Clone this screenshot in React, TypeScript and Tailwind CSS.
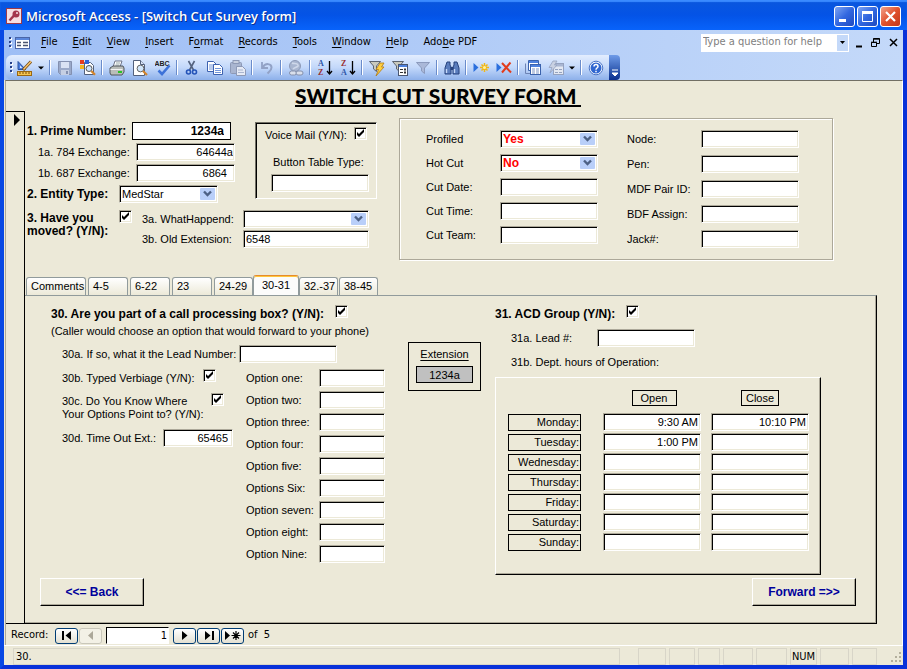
import type { ReactNode } from "react";

const sunken =
  "border border-t-[#aca899] border-l-[#aca899] border-r-white border-b-white shadow-[inset_1px_1px_0_#000,inset_-1px_-1px_0_#ece9d8]";
const raised =
  "border border-t-white border-l-white border-r-black border-b-black shadow-[inset_-1px_-1px_0_#aca899]";
const boldLabel = "text-[12px] font-bold";

/* ---------- form controls ---------- */

function Field({ id, value = "", className = "w-[98px]", label }: { id?: string; value?: string; className?: string; label?: string }) {
  return (
    <input
      id={id}
      aria-label={label}
      type="text"
      defaultValue={value}
      className={`block h-[18px] shrink-0 bg-white outline-none ${sunken} ${className}`}
    />
  );
}

function Combo({ id, value = "", className = "w-[98px]", textClass = "" }: { id: string; value?: string; className?: string; textClass?: string }) {
  return (
    <span className={`grid h-[18px] shrink-0 bg-white ${sunken} ${className}`}>
      <select id={id} defaultValue={value} className={`col-start-1 row-start-1 h-4 w-full appearance-none bg-transparent pl-0.5 leading-4 outline-none ${textClass}`}>
        <option>{value}</option>
      </select>
      <svg viewBox="0 0 15 12" className="pointer-events-none col-start-1 row-start-1 mt-0.5 mr-0.5 h-3 w-[15px] justify-self-end">
        <rect width="15" height="12" rx="1" fill="#b9cff9" />
        <path d="M4 3.5 L7.5 7 L11 3.5" fill="none" stroke="#4d6185" strokeWidth="2.4" />
      </svg>
    </span>
  );
}

function Check({ id }: { id: string }) {
  return (
    <span className="grid size-[13px] shrink-0">
      <input id={id} type="checkbox" defaultChecked className={`peer col-start-1 row-start-1 size-[13px] appearance-none bg-white ${sunken}`} />
      <svg viewBox="0 0 13 13" className="pointer-events-none invisible col-start-1 row-start-1 size-[13px] peer-checked:visible">
        <path d="M3 5v3l2 2 5-5V2L5 7z" fill="#000" />
      </svg>
    </span>
  );
}

/* ---------- toolbar ---------- */

function Tool({ name, children }: { name: string; children: ReactNode }) {
  return (
    <button type="button" aria-label={name} className="flex h-[22px] w-[23px] shrink-0 items-center justify-center">
      <svg viewBox="0 0 16 16" className="size-4" fill="none">
        {children}
      </svg>
    </button>
  );
}

function Sep() {
  return <span className="mx-0.5 h-[15px] w-0.5 shrink-0 border-r border-l border-l-[#6a8ccb] border-r-white" />;
}

function Caret({ name }: { name: string }) {
  return (
    <button type="button" aria-label={name} className="flex h-[22px] w-[11px] shrink-0 items-center">
      <svg viewBox="0 0 6 4" className="ml-0.5 h-1 w-1.5">
        <path d="M0 0.5h6L3 3.5z" fill="#000" />
      </svg>
    </button>
  );
}

function Grip() {
  return (
    <svg viewBox="0 0 3 12" className="h-3 w-[3px] shrink-0">
      {[0, 4, 8].map((y) => (
        <g key={y}>
          <rect x="1" y={y + 1} width="2" height="2" fill="#fff" />
          <rect y={y} width="2" height="2" fill="#27418a" />
        </g>
      ))}
    </svg>
  );
}

const Funnel = () => <path d="M0.5 1.500h11L7.500 6v5.500L4.500 9V6z" fill="#c9c9bd" stroke="#5d6470" />;

function Letter({ y, color, children }: { y: number; color: string; children: string }) {
  return (
    <text x={1} y={y} fontSize="8" fontWeight="bold" fontFamily="Liberation Serif, serif" fill={color}>
      {children}
    </text>
  );
}

function Toolbar() {
  return (
    <div className="flex h-[25px] shrink-0 pl-0.5">
      <div className="flex items-center rounded-l-md bg-linear-to-b from-[#e3edfe] via-[#c3d8fa] to-[#8db0ea] pl-1">
        <Grip />
        <Tool name="Design view">
          <path d="M1 1.5 L8.5 9.5H1z" fill="#4b7ee0" stroke="#28509f" />
          <path d="M3 5.5v2.5h2.4z" fill="#dbe8fd" />
          <rect x="0.5" y="11.5" width="14" height="4" fill="#f5c552" stroke="#9a6712" />
          <path d="M3 12v2M6 12v2M9 12v2M12 12v2" stroke="#7a4c08" />
          <path d="M6 10 L14 1.5" stroke="#6b4510" strokeWidth="3" />
          <path d="M6.5 9.5 L14 1.5" stroke="#fbc36a" strokeWidth="1.6" />
        </Tool>
        <Caret name="Views" />
        <Sep />
        <Tool name="Save">
          <path d="M1.5 1.5h13v13h-11l-2-2z" fill="#9aa9c9" stroke="#8390b0" />
          <rect x="4" y="2" width="8" height="6" fill="#d9e2f4" />
          <rect x="4" y="10" width="8" height="5" fill="#c5cfe3" />
          <rect x="9" y="11" width="2" height="3" fill="#8390b0" />
        </Tool>
        <Tool name="File search">
          <path d="M4.5 2.500h6l3 3v9h-9z" fill="#fff" stroke="#53617d" />
          <rect x="0" y="0" width="4" height="4" fill="#e33b20" />
          <rect x="5" y="0" width="4" height="4" fill="#2f62d8" />
          <rect x="0" y="5" width="4" height="4" fill="#f4b51f" />
          <circle cx="9" cy="8.5" r="3" fill="#cfe4fb" stroke="#555" />
          <path d="M11.3 11 L15 14.8" stroke="#d3842b" strokeWidth="2.2" />
        </Tool>
        <Sep />
        <Tool name="Print">
          <path d="M6 1h7l-2 6H4z" fill="#fff" stroke="#6d7488" />
          <path d="M7 3h4M6.5 5h4" stroke="#9aa" />
          <path d="M1 8l3-2h10l1 2v4l-2 3H2l-1-2z" fill="#b9bdb9" stroke="#50565e" />
          <path d="M1.5 9.5h12" stroke="#f3f3f3" />
          <rect x="9" y="11" width="4" height="2" fill="#28c328" />
        </Tool>
        <Tool name="Print preview">
          <path d="M1.5 0.5h7l4 4v11h-11z" fill="#fff" stroke="#53617d" />
          <path d="M8.5 0.5v4h4" fill="#dbe5f8" stroke="#53617d" />
          <circle cx="8.5" cy="8.5" r="3.4" fill="#d3e7fb" stroke="#666" />
          <path d="M11 11 L15 15" stroke="#d3842b" strokeWidth="2.2" />
        </Tool>
        <Tool name="Spelling">
          <text x="-0.5" y="6" fontSize="7" fontWeight="bold" fontFamily="Liberation Sans, sans-serif" fill="#222">
            ABC
          </text>
          <path d="M3.5 10.5 L7 14 L14.5 5.5" stroke="#3d72d8" strokeWidth="2.6" />
        </Tool>
        <Sep />
        <Tool name="Cut">
          <path d="M4.5 1 L9.5 10M10.5 1 L5.5 10" stroke="#54627e" strokeWidth="1.6" />
          <circle cx="4.5" cy="12" r="2" stroke="#2454b8" strokeWidth="1.6" />
          <circle cx="10.5" cy="12" r="2" stroke="#2454b8" strokeWidth="1.6" />
        </Tool>
        <Tool name="Copy">
          <path d="M0.5 1.5h6l3 3v7h-9z" fill="#fff" stroke="#3d62b0" />
          <path d="M2 5h5M2 7h5M2 9h4" stroke="#7296da" />
          <path d="M6.5 4.5h6l3 3v7h-9z" fill="#fff" stroke="#3d62b0" />
          <path d="M8 8.5h6M8 10.5h6M8 12.5h6" stroke="#7296da" />
        </Tool>
        <Tool name="Paste">
          <rect x="0.5" y="2.5" width="11" height="11" rx="1" fill="#a9b5d0" stroke="#8d99b6" />
          <rect x="3" y="0.5" width="6" height="3" fill="#c7cfdf" stroke="#8d99b6" />
          <path d="M6.5 6.5h6l3 3v6h-9z" fill="#e5eaf5" stroke="#8d99b6" />
          <path d="M8 10h5M8 12.500h6" stroke="#a9b5d0" />
        </Tool>
        <Sep />
        <Tool name="Undo">
          <path d="M3 2v6h6" stroke="#92a2c6" strokeWidth="1.8" />
          <path d="M3.500 7.500c3-5 9-4 9 0 0 3-2 4-4 6" stroke="#92a2c6" strokeWidth="2" />
        </Tool>
        <Sep />
        <Tool name="Insert hyperlink">
          <circle cx="7" cy="6" r="5.500" fill="#a9b6d0" stroke="#8c99b6" />
          <path d="M4 3c2 1 5 0 6 2s-3 2-5 4" stroke="#cfd8ea" strokeWidth="1.5" />
          <rect x="1.500" y="11" width="7" height="4" rx="2" fill="#d9dfeb" stroke="#8490ac" />
          <rect x="8" y="11" width="7" height="4" rx="2" fill="#d9dfeb" stroke="#8490ac" />
        </Tool>
        <Sep />
        <Tool name="Sort ascending">
          <Letter y={6} color="#2e55a8">A</Letter>
          <Letter y={15} color="#992f2f">Z</Letter>
          <path d="M12.500 1v13M10 11l2.500 3 2.500-3" stroke="#000" strokeWidth="1.300" />
        </Tool>
        <Tool name="Sort descending">
          <Letter y={6} color="#992f2f">Z</Letter>
          <Letter y={15} color="#2e55a8">A</Letter>
          <path d="M12.500 1v13M10 11l2.500 3 2.500-3" stroke="#000" strokeWidth="1.300" />
        </Tool>
        <Sep />
        <Tool name="Filter by selection">
          <Funnel />
          <path d="M11 3h4l-2.500 4H15l-8 9 2.500-6.500H7z" fill="#ffcf3f" stroke="#b27a12" strokeWidth="0.800" />
        </Tool>
        <Tool name="Filter by form">
          <Funnel />
          <rect x="6.500" y="4.500" width="9" height="11" fill="#fff" stroke="#4a5670" />
          <rect x="7" y="5" width="8" height="2" fill="#4f82de" />
          <path d="M8 9.500h3M8 12.500h3" stroke="#333" />
          <rect x="12" y="8.500" width="2" height="2" fill="#333" />
          <rect x="12" y="11.500" width="2" height="2" fill="#333" />
        </Tool>
        <Tool name="Apply filter">
          <path d="M1.500 2.500h13L9.500 8v5.500L6.500 11V8z" fill="#aab8d8" stroke="#8b9abd" />
        </Tool>
        <Sep />
        <Tool name="Find">
          <path d="M3 2h3v3l1 2v7H1V8zM10 2h3l2 6v6H9V7l1-2z" fill="#5a7dbd" stroke="#26427c" />
          <path d="M6.500 7h3v3h-3z" fill="#26427c" />
          <path d="M2.500 9v4M10.500 9v4" stroke="#c5d8f8" strokeWidth="1.400" />
        </Tool>
        <Sep />
        <Tool name="New record">
          <path d="M0.500 3v9l5-4.500z" fill="#2b6fdd" />
          <path d="M11.500 3v9M7 7.500h9M8.500 4.500l6 6M14.500 4.500l-6 6" stroke="#f2b716" strokeWidth="1.500" />
          <circle cx="11.500" cy="7.500" r="1.500" fill="#fff3a0" />
        </Tool>
        <Tool name="Delete record">
          <path d="M0.500 3v9l5-4.500z" fill="#2b6fdd" />
          <path d="M6 3 L15 12.500M14.500 2.500 L6 12.500" stroke="#e23c1c" strokeWidth="2" />
        </Tool>
        <Sep />
        <Tool name="Database window">
          <path d="M3.500 0.500h10v10h-10z" fill="#fff" stroke="#3a62ac" />
          <rect x="4" y="1" width="9" height="2" fill="#4f82de" />
          <path d="M0.500 3.500v10h5" stroke="#6d84b5" />
          <rect x="5.500" y="4.500" width="10" height="10" fill="#fff" stroke="#3a62ac" />
          <rect x="6" y="5" width="9" height="2" fill="#4f82de" />
          <path d="M7 9h3M7 11h3M7 13h3M11 9h3M11 11h3M11 13h3" stroke="#7d95c4" />
        </Tool>
        <Tool name="New object">
          <rect x="5.500" y="3.500" width="10" height="11" fill="#e3e8f2" stroke="#95a2bf" />
          <rect x="6" y="4" width="9" height="2.500" fill="#a9b6d2" />
          <path d="M7 9.500h3M7 12.500h3M11 9.500h3M11 12.500h3" stroke="#95a2bf" />
          <path d="M5 1h4L6.500 5H9l-7 8 2-5.500H1z" fill="#c9d1e2" stroke="#95a2bf" strokeWidth="0.800" />
        </Tool>
        <Caret name="New object list" />
        <Sep />
        <Tool name="Help">
          <circle cx="8" cy="8" r="6.800" fill="#fff" stroke="#4874c8" />
          <circle cx="8" cy="8" r="5.500" fill="#2f66d0" />
          <path d="M6 6.500c0-2.600 4-2.600 4 0 0 1.500-2 1.600-2 3.200M8 10.800v1.400" stroke="#fff" strokeWidth="1.500" />
        </Tool>
        <span className="w-0.5" />
      </div>
      <button type="button" aria-label="Toolbar options" className="flex w-[11px] items-end justify-center rounded-r-sm bg-linear-to-b from-[#6f9be8] to-[#0b2f8e] pb-1">
        <svg viewBox="0 0 7 7" className="size-[7px]">
          <path d="M1 1h6M1 4h6L4 7z" fill="#fff" stroke="#fff" strokeWidth="1" />
        </svg>
      </button>
    </div>
  );
}

/* ---------- window chrome ---------- */

function CaptionButton({ name, red = false, children }: { name: string; red?: boolean; children: ReactNode }) {
  return (
    <button
      type="button"
      aria-label={name}
      className={`size-[21px] rounded-[3px] border border-white bg-linear-to-br ${red ? "from-[#f0a089] via-[#e0512c] to-[#c3371a]" : "from-[#7ea4f2] via-[#3267e0] to-[#1f49bf]"}`}
    >
      <svg viewBox="0 0 19 19" fill="none" className="size-[19px]">
        {children}
      </svg>
    </button>
  );
}

function TitleBar() {
  return (
    <header className="flex h-[30px] shrink-0 items-center bg-linear-to-b from-[#0b57dd] via-[#0453e6] to-[#0863fb] pt-0.5 pr-1.5 pl-1.5 shadow-[inset_0_2px_1px_#3a8bff]">
      <svg viewBox="0 0 16 16" className="mr-1 size-4">
        <rect x="0.500" y="0.500" width="15" height="15" fill="#f6dfe2" stroke="#9b3a4a" />
        <circle cx="10" cy="6" r="3.500" fill="#a3364c" />
        <path d="M8 7.500 L3.500 12.500" stroke="#a3364c" strokeWidth="2.500" />
        <circle cx="11" cy="5" r="1" fill="#f6dfe2" />
      </svg>
      <h1 className="flex-1 pt-0.5 font-['Open_Sans',sans-serif] text-[13px] font-semibold whitespace-nowrap text-white [text-shadow:1px_1px_0_#0b2f8e]">
        Microsoft Access - [Switch Cut Survey form]
      </h1>
      <div className="flex gap-0.5">
        <CaptionButton name="Minimize">
          <path d="M4 13.500h7" stroke="#fff" strokeWidth="3" />
        </CaptionButton>
        <CaptionButton name="Maximize">
          <path d="M4.500 4.500h10v10h-10z" stroke="#fff" />
          <path d="M4 5.500h11" stroke="#fff" strokeWidth="3" />
        </CaptionButton>
        <CaptionButton name="Close" red>
          <path d="M5 5l9 9M14 5l-9 9" stroke="#fff" strokeWidth="2.200" />
        </CaptionButton>
      </div>
    </header>
  );
}

const menus = [
  ["", "F", "ile"],
  ["", "E", "dit"],
  ["", "V", "iew"],
  ["", "I", "nsert"],
  ["F", "o", "rmat"],
  ["", "R", "ecords"],
  ["", "T", "ools"],
  ["", "W", "indow"],
  ["", "H", "elp"],
  ["Ado", "b", "e PDF"],
];

function MenuBar() {
  return (
    <nav className="flex h-[25px] shrink-0 items-center pl-[5px] font-['DejaVu_Sans_Condensed','DejaVu_Sans',sans-serif] text-[11px]">
      <Grip />
      <svg viewBox="0 0 15 12" className="mr-[11px] ml-[3px] h-3 w-[15px] shrink-0" fill="none">
        <rect x="0.500" y="0.500" width="14" height="11" fill="#fff" stroke="#4a66a8" />
        <rect x="1" y="1" width="13" height="2" fill="#5b87dc" />
        <path d="M2 5.500h4M2 8.500h4M8 5.500h5M8 8.500h5" stroke="#4b5570" strokeWidth="1.600" />
      </svg>
      <div className="flex flex-1 gap-[15px]">
        {menus.map(([a, u, b]) => (
          <button key={a + u + b} type="button" className="whitespace-nowrap">
            {a}
            <span className="underline underline-offset-2">{u}</span>
            {b}
          </button>
        ))}
      </div>
      <div className="flex h-[18px] w-[148px] shrink-0 border border-white bg-white">
        <input type="text" aria-label="Help question" placeholder="Type a question for help" className="min-w-0 flex-1 pl-px outline-none placeholder:text-[#808080]" />
        <button type="button" aria-label="Recent questions" className="flex w-[11px] items-center justify-center bg-[#c4d9f9]">
          <svg viewBox="0 0 5 3" className="h-[3px] w-[5px]">
            <path d="M0 0h5L2.500 3z" fill="#000" />
          </svg>
        </button>
      </div>
      <svg viewBox="0 0 44 12" className="mx-[5px] h-3 w-[44px] shrink-0" fill="none" stroke="#000">
        <path d="M2 9.500h6" strokeWidth="2" />
        <path d="M19.500 5V1.500h6v5H23M19 2.200h7" />
        <path d="M17.500 5.500h5v4h-5zM17 5.200h6" />
        <path d="M36 2l7 7M43 2l-7 7" strokeWidth="1.500" />
      </svg>
    </nav>
  );
}

/* ---------- form header ---------- */

function LeftFields() {
  return (
    <div className="flex w-[209px] flex-col gap-[3px]">
      <div className="flex h-[18px] items-center">
        <label htmlFor="prime" className={`w-[105px] ${boldLabel}`}>1. Prime Number:</label>
        <input id="prime" defaultValue="1234a" className={`h-[18px] w-[99px] border border-black bg-white pr-1.5 text-right outline-none ${boldLabel}`} />
      </div>
      <div className="flex h-[18px] items-center pl-[11px]">
        <label htmlFor="x784" className="w-[98px]">1a. 784 Exchange:</label>
        <Field id="x784" value="64644a" className="w-[99px] pr-px text-right" />
      </div>
      <div className="flex h-[18px] items-center pl-[11px]">
        <label htmlFor="x687" className="w-[98px]">1b. 687 Exchange:</label>
        <Field id="x687" value="6864" className="w-[99px] pr-[7px] text-right" />
      </div>
      <div className="flex h-[18px] items-center">
        <label htmlFor="entity" className={`w-[92px] ${boldLabel}`}>2. Entity Type:</label>
        <Combo id="entity" value="MedStar" className="w-[99px]" />
      </div>
    </div>
  );
}

function VoiceBox() {
  return (
    <div className="h-[77px] w-[122px] border border-t-[#716f64] border-r-white border-b-white border-l-[#716f64] px-[13px] pt-1 shadow-[inset_1px_1px_0_#000]">
      <div className="-mx-1 flex h-[18px] justify-between">
        <label htmlFor="voice" className="leading-4">Voice Mail (Y/N):</label>
        <Check id="voice" />
      </div>
      <label htmlFor="btype" className="mt-[9px] block pl-1 text-left leading-4 whitespace-nowrap">Button Table Type:</label>
      <div className="mt-1 pl-0.5">
        <Field id="btype" className="w-[98px]" />
      </div>
    </div>
  );
}

const cutLeft = ["Profiled", "Hot Cut", "Cut Date:", "Cut Time:", "Cut Team:"];
const cutRight = ["Node:", "Pen:", "MDF Pair ID:", "BDF Assign:", "Jack#:"];

function CutPanel() {
  return (
    <div className="mt-1.5 flex h-[142px] w-[434px] shrink-0 gap-[29px] border border-[#aca899] pt-[11px] pl-[26px] shadow-[inset_1px_1px_0_#fff,1px_1px_0_#fff]">
      <div className="flex flex-col gap-1.5">
        {cutLeft.map((name, i) => (
          <div key={name} className="flex h-[18px] items-center">
            <label htmlFor={`cutl${i}`} className="w-[74px]">{name}</label>
            {i < 2 ? (
              <Combo id={`cutl${i}`} value={i === 0 ? "Yes" : "No"} textClass={`text-[#ff0000] ${boldLabel}`} />
            ) : (
              <Field id={`cutl${i}`} />
            )}
          </div>
        ))}
      </div>
      <div className="flex flex-col gap-[7px]">
        {cutRight.map((name, i) => (
          <div key={name} className="flex h-[18px] items-center">
            <label htmlFor={`cutr${i}`} className="w-[74px]">{name}</label>
            <Field id={`cutr${i}`} />
          </div>
        ))}
      </div>
    </div>
  );
}

function FormHeader() {
  return (
    <section className="flex items-start gap-[22px] pl-0.5">
      <div className="w-[350px] shrink-0 pt-2.5">
        <div className="flex gap-[19px]">
          <LeftFields />
          <VoiceBox />
        </div>
        <div className="mt-[7px] flex">
          <label htmlFor="moved" className={`w-[92px] pt-0.5 leading-[13px] ${boldLabel}`}>
            3. Have you moved? (Y/N):
          </label>
          <Check id="moved" />
          <div className="ml-2.5 flex flex-col gap-0.5">
            <div className="flex h-[18px] items-center">
              <label htmlFor="what" className="w-[101px]">3a. WhatHappend:</label>
              <Combo id="what" className="w-[126px]" />
            </div>
            <div className="flex h-[18px] items-center">
              <label htmlFor="oldext" className="w-[101px]">3b. Old Extension:</label>
              <Field id="oldext" value="6548" className="w-[126px] pl-0.5" />
            </div>
          </div>
        </div>
      </div>
      <CutPanel />
    </section>
  );
}

/* ---------- tabs ---------- */

const tabs: [string, string][] = [
  ["Comments", "w-[60px] mr-0.5"],
  ["4-5", "w-10 mr-0.5"],
  ["6-22", "w-10 mr-0.5"],
  ["23", "w-10 mr-0.5"],
  ["24-29", "w-[39px]"],
  ["30-31", "w-[46px]"],
  ["32.-37", "w-[39px] mr-px"],
  ["38-45", "w-[39px]"],
];

function Tabs() {
  return (
    <div role="tablist" className="mt-[15px] flex h-5 items-end pl-px">
      {tabs.map(([name, width]) =>
        name === "30-31" ? (
          <button key={name} role="tab" aria-selected="true" className={`-mb-px h-[21px] shrink-0 rounded-t-[3px] border border-b-0 border-[#919b9c] border-t-[#e68b2c] bg-[#fcfcfb] pb-0.5 shadow-[inset_0_1px_0_#ffc73c] ${width}`}>
            {name}
          </button>
        ) : (
          <button
            key={name}
            role="tab"
            aria-selected="false"
            className={`h-[18px] shrink-0 rounded-t-[3px] border border-b-0 border-[#919b9c] bg-linear-to-b from-white to-[#ece9d8] pl-1 text-left whitespace-nowrap ${width}`}
          >
            {name}
          </button>
        ),
      )}
    </div>
  );
}

/* ---------- page 30-31 ---------- */

const options = ["Option one:", "Option two:", "Option three:", "Option four:", "Option five:", "Options Six:", "Option seven:", "Option eight:", "Option Nine:"];

function CallProcessing() {
  return (
    <section className="w-[334px] shrink-0">
      <div className="flex h-[18px] gap-[11px]">
        <label htmlFor="q30" className={`leading-[18px] whitespace-nowrap ${boldLabel}`}>
          30. Are you part of a call processing box? (Y/N):
        </label>
        <Check id="q30" />
      </div>
      <p className="h-4 leading-4 whitespace-nowrap">(Caller would choose an option that would forward to your phone)</p>
      <div className="mt-1.5 flex h-[18px] items-center pl-[11px]">
        <label htmlFor="q30a" className="w-[177px]">30a. If so, what it the Lead Number:</label>
        <Field id="q30a" />
      </div>
      <div className="mt-1.5 flex justify-between">
        <div className="w-[182px] pl-[11px]">
          <div className="flex h-6">
            <label htmlFor="q30b" className="w-[141px] leading-[18px]">30b. Typed Verbiage (Y/N):</label>
            <Check id="q30b" />
          </div>
          <div className="flex h-9">
            <label htmlFor="q30c" className="w-[149px] pt-0.5 leading-[13px]">
              30c. Do You Know Where
              <br />
              Your Options Point to? (Y/N):
            </label>
            <Check id="q30c" />
          </div>
          <div className="flex h-[18px] items-center">
            <label htmlFor="q30d" className="w-[101px]">30d. Time Out Ext.:</label>
            <Field id="q30d" value="65465" className="w-[70px] pr-1 text-right" />
          </div>
        </div>
        <div className="flex flex-col gap-1">
          {options.map((name, i) => (
            <div key={name} className="flex h-[18px] items-center">
              <label htmlFor={`opt${i}`} className="w-[73px]">{name}</label>
              <Field id={`opt${i}`} className="w-[66px]" />
            </div>
          ))}
        </div>
      </div>
    </section>
  );
}

const days: [string, string, string][] = [
  ["Monday:", "9:30 AM", "10:10 PM"],
  ["Tuesday:", "1:00 PM", ""],
  ["Wednesday:", "", ""],
  ["Thursday:", "", ""],
  ["Friday:", "", ""],
  ["Saturday:", "", ""],
  ["Sunday:", "", ""],
];

function AcdGroup() {
  return (
    <section className="flex w-[326px] shrink-0 flex-col gap-1.5">
      <div className="flex h-[18px] gap-[11px]">
        <label htmlFor="q31" className={`leading-[18px] whitespace-nowrap ${boldLabel}`}>31. ACD Group (Y/N):</label>
        <Check id="q31" />
      </div>
      <div className="flex h-[18px] items-center pl-4">
        <label htmlFor="q31a" className="w-[86px]">31a. Lead #:</label>
        <Field id="q31a" />
      </div>
      <p className="h-[18px] pl-4 leading-[18px]">31b. Dept. hours of Operation:</p>
      <div className={`h-[198px] pl-3 ${raised}`}>
        <table className="border-collapse">
          <thead>
            <tr className="h-[34px]">
              <th className="w-[95px] p-0" />
              <th className="w-[108px] p-0 pt-1.5 pr-1.5 font-normal">
                <span className="inline-block w-[45px] border border-black leading-[14px]">Open</span>
              </th>
              <th className="w-[98px] p-0 pt-1.5 font-normal">
                <span className="inline-block w-[38px] border border-black leading-[14px]">Close</span>
              </th>
            </tr>
          </thead>
          <tbody>
            {days.map(([day, open, close]) => (
              <tr key={day} className="h-5">
                <th className="p-0 font-normal">
                  <span className="block h-[17px] w-[73px] border border-black pr-px text-right leading-[15px]">{day}</span>
                </th>
                <td className="p-0">
                  <Field label={`${day} open`} value={open} className="w-[98px] pr-0.5 text-right" />
                </td>
                <td className="p-0">
                  <Field label={`${day} close`} value={close} className="w-[98px] pr-0.5 text-right" />
                </td>
              </tr>
            ))}
          </tbody>
        </table>
      </div>
    </section>
  );
}

function Page() {
  return (
    <div className="mr-[25px] flex-1 border-t border-r border-b border-t-[#919b9c] border-r-black border-b-black pb-[17px] shadow-[inset_-1px_-1px_0_#aca899]">
      <div className="flex pt-[9px] pl-[26px]">
        <CallProcessing />
        <div className="mt-[37px] ml-[23px] h-[49px] w-[73px] shrink-0 border border-black px-[7px] pt-[3px] text-center">
          <label htmlFor="ext" className="block leading-4 underline underline-offset-2">Extension</label>
          <input id="ext" readOnly value="1234a" className="mt-1 block h-[17px] w-full border border-black bg-[#c0c0c0] text-center outline-none" />
        </div>
        <div className="ml-3.5">
          <AcdGroup />
        </div>
      </div>
      <div className={`mt-[3px] flex justify-between pr-5 pl-[15px] text-[#00009c] ${boldLabel}`}>
        <button type="button" className={`h-7 w-[104px] ${raised}`}>&lt;&lt;= Back</button>
        <button type="button" className={`h-7 w-[104px] ${raised}`}>Forward =&gt;&gt;</button>
      </div>
    </div>
  );
}

/* ---------- record navigation and status bar ---------- */

function NavButton({ name, disabled = false, children }: { name: string; disabled?: boolean; children: ReactNode }) {
  return (
    <button
      type="button"
      aria-label={name}
      disabled={disabled}
      className={`flex h-4 w-[23px] items-center justify-center rounded-[3px] border ${disabled ? "border-[#c9c7ba] bg-[#f3f1e6] text-[#aca899]" : "border-[#003c74] bg-linear-to-b from-white to-[#e3e0d2] text-black"}`}
    >
      <svg viewBox="0 0 16 9" className="h-[9px] w-4" fill="currentColor" stroke="none">
        {children}
      </svg>
    </button>
  );
}

function RecordNav() {
  return (
    <div className="flex h-[21px] shrink-0 items-center pt-0.5 pl-[5px] font-['DejaVu_Sans_Condensed','DejaVu_Sans',sans-serif] text-[11px]">
      <label htmlFor="record" className="w-11">Record:</label>
      <div className="flex gap-px">
        <NavButton name="First record">
          <path d="M3 0h2v9H3zM12 0v9L6.500 4.500z" />
        </NavButton>
        <NavButton name="Previous record" disabled>
          <path d="M10 0v9L5 4.500z" />
        </NavButton>
      </div>
      <input id="record" defaultValue="1" className="mx-1 h-[17px] w-[63px] border border-t-black border-r-white border-b-white border-l-black bg-white pr-px text-right outline-none" />
      <div className="flex gap-px">
        <NavButton name="Next record">
          <path d="M5 0v9l5.500-4.500z" />
        </NavButton>
        <NavButton name="Last record">
          <path d="M4 0v9l5.500-4.500zM11 0h2v9h-2z" />
        </NavButton>
        <NavButton name="New record">
          <path d="M0 0v9l5-4.500z" />
          <path d="M11 0v9M6.500 4.500h9M8 1.500l6 6M14 1.500l-6 6" stroke="currentColor" strokeWidth="1.200" />
        </NavButton>
      </div>
      <span className="ml-1 whitespace-pre">of  5</span>
    </div>
  );
}

const cells = ["w-7", "w-[26px]", "w-[22px]", "w-[30px]", "w-[31px]"];

function StatusBar() {
  return (
    <footer className="flex h-5 shrink-0 items-end gap-[3px] border-t border-white pl-[9px] font-['DejaVu_Sans_Condensed','DejaVu_Sans',sans-serif] text-[11px]">
      <span className="mr-[15px] h-[17px] flex-1 border border-[#d8d5c8] pl-0.5 leading-[15px]">30.</span>
      {cells.map((w) => (
        <span key={w} className={`h-[17px] border border-[#d8d5c8] ${w}`} />
      ))}
      <span className="h-[17px] w-[27px] border border-[#d8d5c8] text-center leading-[15px]">NUM</span>
      <span className="h-[17px] w-[29px] border border-[#d8d5c8]" />
      <span className="h-[17px] w-[25px] border border-[#d8d5c8]" />
      <svg viewBox="0 0 12 12" className="mr-px mb-0.5 ml-2.5 size-3" fill="#b3af9d">
        <path d="M9 1h2v2H9zM5 5h2v2H5zM9 5h2v2H9zM1 9h2v2H1zM5 9h2v2H5zM9 9h2v2H9z" />
      </svg>
    </footer>
  );
}

export default function App() {
  return (
    <div className="flex min-h-screen w-full min-w-[900px] flex-col bg-[#0831d9] font-['Liberation_Sans',Arial,sans-serif] text-[11px] text-black">
      <TitleBar />
      <div className="flex flex-1 flex-col border-r-4 border-b-4 border-l-4 border-r-[#0831d9] border-b-[#0831d9] border-l-[#0848e4] bg-[#ece9d8]">
        <div className="bg-linear-to-r from-[#9ebef5] to-[#c4d9f9]">
          <MenuBar />
          <Toolbar />
        </div>
        <main className="ml-px flex flex-1 flex-col border-t border-r border-l border-t-[#716f64] border-r-white border-l-[#aca899]">
          <h2 className="h-[30px] pt-[3px] pl-[289px]">
            <span className="inline-block h-[23px] border-b-2 border-black font-['Lato',sans-serif] text-[21px] leading-6 font-black whitespace-pre">
              {"SWITCH CUT SURVEY FORM "}
            </span>
          </h2>
          <div className="flex flex-1">
            <div className="w-[19px] shrink-0 border-t border-r border-b border-black pt-0.5 pl-2">
              <svg viewBox="0 0 6 12" className="h-3 w-1.5">
                <path d="M0 0v12l6-6z" />
              </svg>
            </div>
            <div className="flex flex-1 flex-col pt-px">
              <FormHeader />
              <Tabs />
              <Page />
            </div>
          </div>
          <RecordNav />
        </main>
        <StatusBar />
      </div>
    </div>
  );
}
